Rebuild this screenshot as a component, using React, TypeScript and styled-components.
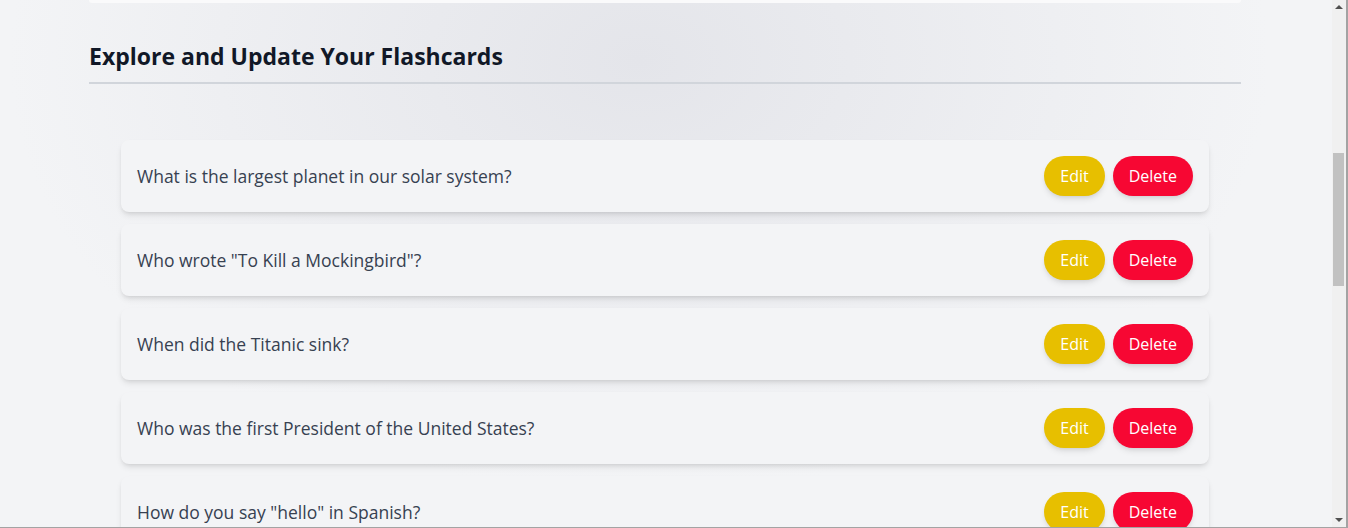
import React from "react";
import styled, { createGlobalStyle } from "styled-components";

const GlobalStyle = createGlobalStyle`
  html, body {
    margin: 0;
    padding: 0;
    overflow: hidden;
  }
  body {
    font-family: "Open Sans", "Noto Sans", sans-serif;
    background: #f3f4f6;
    color: #374151;
  }
  * { box-sizing: border-box; }
`;

const Window = styled.div`
  height: 528px;
  display: flex;
  border-bottom: 1px solid #a3a3a3;
  overflow: hidden;
`;

const Page = styled.main`
  flex: 1;
  height: 527px;
  overflow: hidden;
  padding-right: 2px;
  background:
    radial-gradient(ellipse 900px 620px at 48% 60px, #e4e5ea 0%, rgba(243, 244, 246, 0) 70%),
    #f3f4f6;
`;

const Container = styled.div`
  max-width: 1152px;
  margin: 0 auto;
`;

const FormCardEdge = styled.div`
  height: 3px;
  background: #fafafb;
  border-radius: 0 0 10px 10px;
  box-shadow: 0 10px 15px -3px rgba(0, 0, 0, 0.12), 0 4px 6px -4px rgba(0, 0, 0, 0.12);
`;

const Heading = styled.h2`
  margin: 37px 0 0;
  padding-bottom: 10px;
  border-bottom: 2px solid #d1d5db;
  font-size: 23px;
  line-height: 32px;
  font-weight: 700;
  color: #111827;
`;

const List = styled.ul`
  list-style: none;
  margin: 56px 0 0;
  padding: 0 32px;
  display: flex;
  flex-direction: column;
  gap: 12px;
`;

const Card = styled.li`
  display: flex;
  align-items: center;
  justify-content: space-between;
  flex-shrink: 0;
  height: 72px;
  padding: 16px;
  background: #f3f4f6;
  border-radius: 8px;
  box-shadow: 0 4px 6px -1px rgba(0, 0, 0, 0.1), 0 2px 4px -2px rgba(0, 0, 0, 0.1);
`;

const Question = styled.span`
  font-size: 17.5px;
  line-height: 28px;
  color: #374151;
`;

const Actions = styled.div`
  display: flex;
  gap: 8px;
`;

const Pill = styled.button<{ $tone: "edit" | "delete" }>`
  height: 40px;
  padding: 0 16px;
  border: none;
  border-radius: 9999px;
  font-family: inherit;
  font-size: 16px;
  line-height: 24px;
  color: #ffffff;
  cursor: pointer;
  background: ${(p) => (p.$tone === "edit" ? "#e7bf00" : "#f70733")};
  box-shadow: 0 4px 6px -1px rgba(0, 0, 0, 0.1), 0 2px 4px -2px rgba(0, 0, 0, 0.1);
`;

const Scrollbar = styled.div`
  position: relative;
  width: 16px;
  height: 527px;
  flex-shrink: 0;
  background: #f0f0f0;
  border-right: 2px solid #a3a3a3;
`;

const Arrow = styled.span<{ $dir: "up" | "down" }>`
  position: absolute;
  left: 3px;
  ${(p) => (p.$dir === "up" ? "top: 5px;" : "bottom: 5px;")}
  width: 0;
  height: 0;
  border-left: 4px solid transparent;
  border-right: 4px solid transparent;
  ${(p) =>
    p.$dir === "up"
      ? "border-bottom: 4px solid #505050;"
      : "border-top: 4px solid #505050;"}
`;

const Thumb = styled.span`
  position: absolute;
  left: 1px;
  top: 153px;
  width: 11px;
  height: 133px;
  background: #c1c1c1;
`;

const questions = [
  "What is the largest planet in our solar system?",
  'Who wrote "To Kill a Mockingbird"?',
  "When did the Titanic sink?",
  "Who was the first President of the United States?",
  'How do you say "hello" in Spanish?',
];

export default function App() {
  return (
    <>
      <GlobalStyle />
      <Window>
        <Page>
          <Container>
            <FormCardEdge />
            <Heading>Explore and Update Your Flashcards</Heading>
            <List>
              {questions.map((q) => (
                <Card key={q}>
                  <Question>{q}</Question>
                  <Actions>
                    <Pill $tone="edit">Edit</Pill>
                    <Pill $tone="delete">Delete</Pill>
                  </Actions>
                </Card>
              ))}
            </List>
          </Container>
        </Page>
        <Scrollbar>
          <Arrow $dir="up" />
          <Thumb />
          <Arrow $dir="down" />
        </Scrollbar>
      </Window>
    </>
  );
}
